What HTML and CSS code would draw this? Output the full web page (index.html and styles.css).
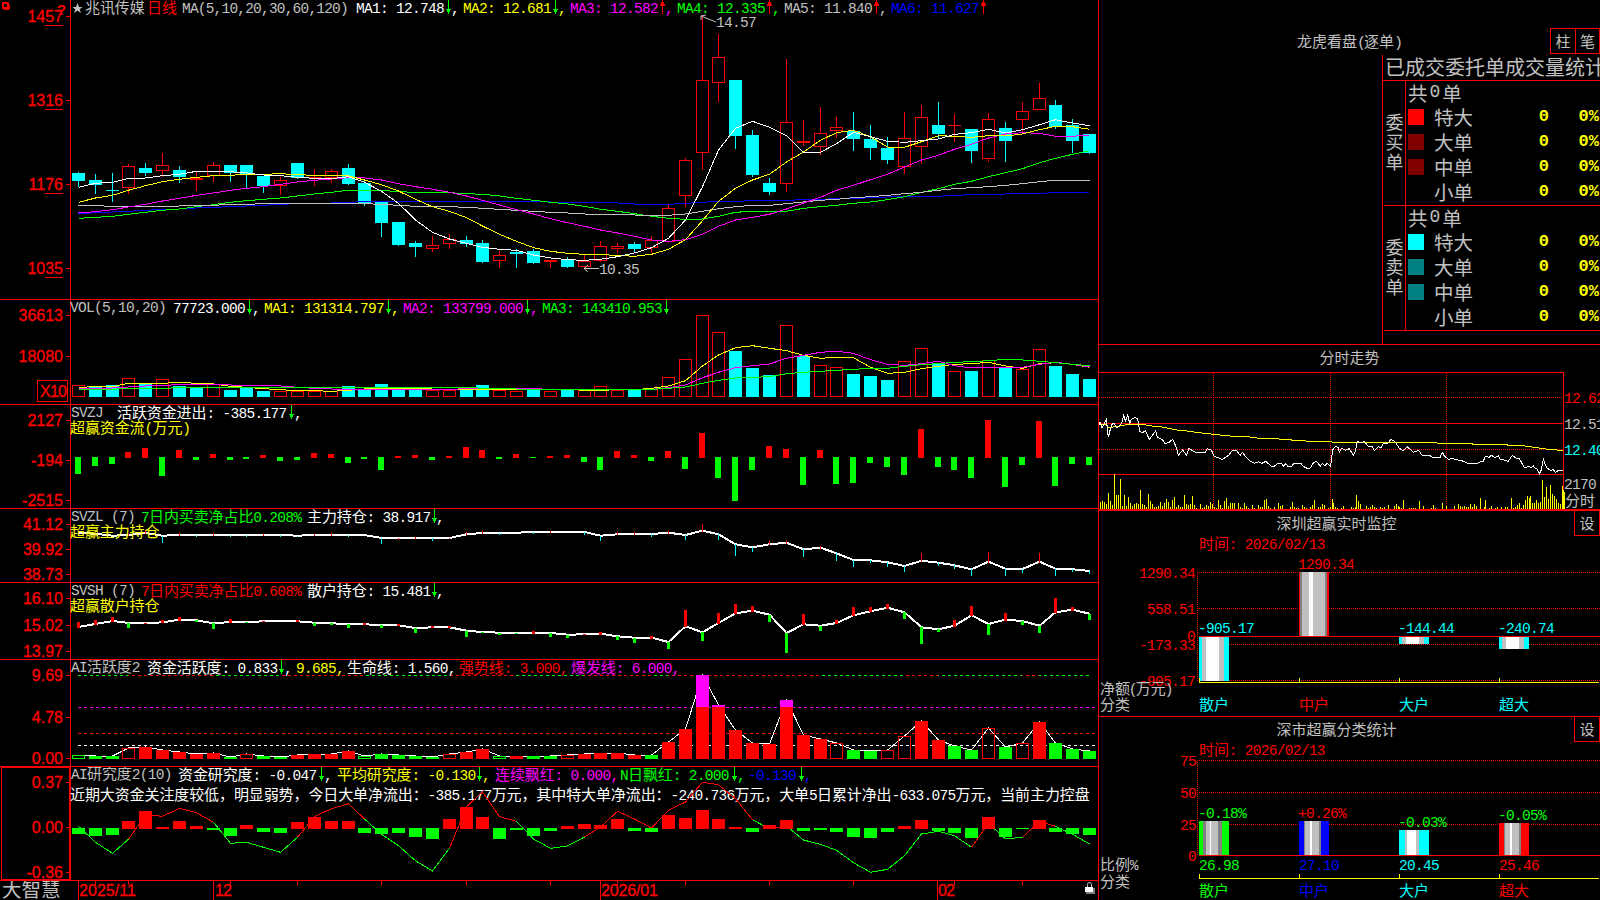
FILE: index.html
```html
<!DOCTYPE html>
<html lang="zh-CN">
<head>
<meta charset="utf-8">
<title>兆讯传媒 日线</title>
<link rel="stylesheet" href="styles.css">
</head>
<body>
<svg class="defs" width="0" height="0" aria-hidden="true">
  <defs>
    <g id="dn"><path d="M0 0V14M-2 9H2L0 13Z" fill="#0f0" stroke="#0f0"/></g>
    <g id="up"><path d="M0 14V0M-2 5H2L0 1Z" fill="#f00" stroke="#f00"/></g>
  </defs>
</svg>
<div class="screen">
  <main class="charts">
    <section class="panel">
      <svg width="1098" height="299" viewBox="0 0 1098 299">
        <path class="axis" d="M70.5 0V299M66 16.5H70M66 100.5H70M66 184.5H70M66 268.5H70"/>
        <path class="axis" d="M45 25.5H63M45 109.5H63M45 193.5H63M45 277.5H63"/>
        <rect x="3" y="3" width="5" height="5" fill="none" stroke="#f00" stroke-width="2"/><path class="axis" d="M4 9.500H9M9.500 5V9"/>
        <text class="q" x="57" y="15">?</text>
        <g class="scale"><text x="63" y="22">1457</text><text x="63" y="106">1316</text><text x="63" y="190">1176</text><text x="63" y="274">1035</text></g>
        <g id="price"></g>
        <path d="M77.500 3L79 7H82.500L79.700 9.300L81 13L77.500 10.600L74 13L75.300 9.300L72.500 7H76Z" fill="#c0c0c0"/>
        <g class="m">
          <text class="z silver" x="85" y="13">兆讯传媒</text><text class="z red" x="147" y="13">日线</text>
          <text class="silver" x="182" y="13" textLength="166">MA(5,10,20,30,60,120)</text>
          <text class="white" x="356" y="13">MA1: 12.748</text><text class="white" x="451" y="13">,</text>
          <text class="yellow" x="463" y="13">MA2: 12.681</text><text class="yellow" x="558" y="13">,</text>
          <text class="magenta" x="570" y="13">MA3: 12.582</text><text class="magenta" x="665" y="13">,</text>
          <text class="lime" x="677" y="13">MA4: 12.335</text><text class="lime" x="772" y="13">,</text>
          <text class="silver" x="784" y="13">MA5: 11.840</text><text class="silver" x="879" y="13">,</text>
          <text class="blue" x="891" y="13">MA6: 11.627</text>
          <text class="silver" x="716" y="27">14.57</text><text class="silver" x="599" y="274">10.35</text>
        </g>
        <path class="mark" d="M701 16L716 22M701 16V20M701 16L706 15M584 268.500H599M588 265L584 268.500L588 272"/>
        <use href="#dn" x="448.500" y="0"/><use href="#dn" x="555.500" y="0"/><use href="#up" x="662.500" y="0"/><use href="#up" x="769.500" y="0"/><use href="#up" x="876.500" y="0"/><use href="#up" x="983.500" y="0"/>
      </svg>
    </section>
    <section class="panel">
      <svg width="1098" height="104" viewBox="0 300 1098 104">
        <path class="axis" d="M70.5 300V404M66 315.500H70M66 356.500H70"/>
        <rect class="axis" x="37.500" y="380.500" width="30" height="21"/>
        <g class="scale"><text x="63" y="321">36613</text><text x="63" y="362">18080</text><text x="67" y="397" textLength="27">X10</text></g>
        <g id="volume"></g>
        <g class="m">
          <text class="silver" x="70" y="312">VOL(5,10,20)</text>
          <text class="white" x="173" y="313">77723.000</text><text class="white" x="252" y="313">,</text>
          <text class="yellow" x="264" y="313">MA1: 131314.797</text><text class="yellow" x="391" y="313">,</text>
          <text class="magenta" x="403" y="313">MA2: 133799.000</text><text class="magenta" x="530" y="313">,</text>
          <text class="lime" x="542" y="313">MA3: 143410.953</text>
        </g>
        <use href="#dn" x="249.500" y="300"/><use href="#dn" x="388.500" y="300"/><use href="#dn" x="527.500" y="300"/><use href="#dn" x="666.500" y="300"/>
      </svg>
    </section>
    <section class="panel">
      <svg width="1098" height="103" viewBox="0 405 1098 103">
        <path class="axis" d="M70.5 405V508M66 420.500H70M66 460.500H70M66 500.500H70"/>
        <g class="scale"><text x="63" y="426">2127</text><text x="63" y="466">-194</text><text x="63" y="506">-2515</text></g>
        <g id="flow"></g>
        <g class="m">
          <text class="silver" x="71" y="417">SVZJ</text>
          <text class="white" x="117" y="418"><tspan class="z">活跃资金进出</tspan>: -385.177</text><text class="white" x="294" y="418">,</text>
          <text class="yellow" x="70" y="433"><tspan class="z">超赢资金流</tspan>(<tspan class="z">万元</tspan>)</text>
        </g>
        <use href="#dn" x="291.500" y="405"/>
      </svg>
    </section>
    <section class="panel">
      <svg width="1098" height="73" viewBox="0 509 1098 73">
        <path class="axis" d="M70.5 509V582M66 524.500H70M66 549.500H70M66 574.500H70"/>
        <g class="scale"><text x="63" y="530">41.12</text><text x="63" y="555">39.92</text><text x="63" y="580">38.73</text></g>
        <g id="major"></g>
        <g class="m">
          <text class="silver" x="71" y="521">SVZL (7)</text>
          <text class="lime" x="141" y="522">7<tspan class="z">日内买卖净占比</tspan>0.208%</text>
          <text class="white" x="307" y="522"><tspan class="z">主力持仓</tspan>: 38.917</text><text class="white" x="436" y="522">,</text>
          <text class="yellow z" x="70" y="537">超赢主力持仓</text>
        </g>
        <use href="#dn" x="434.500" y="509"/>
      </svg>
    </section>
    <section class="panel">
      <svg width="1098" height="76" viewBox="0 583 1098 76">
        <path class="axis" d="M70.5 583V659M66 598.500H70M66 625.500H70M66 651.500H70"/>
        <g class="scale"><text x="63" y="604">16.10</text><text x="63" y="631">15.02</text><text x="63" y="657">13.97</text></g>
        <g id="retail"></g>
        <g class="m">
          <text class="silver" x="71" y="595">SVSH (7)</text>
          <text class="red" x="141" y="596">7<tspan class="z">日内买卖净占比</tspan>0.608%</text>
          <text class="white" x="307" y="596"><tspan class="z">散户持仓</tspan>: 15.481</text><text class="white" x="436" y="596">,</text>
          <text class="yellow z" x="70" y="611">超赢散户持仓</text>
        </g>
        <use href="#dn" x="434.500" y="583"/>
      </svg>
    </section>
    <section class="panel">
      <svg width="1098" height="106" viewBox="0 660 1098 106">
        <path class="axis" d="M70.5 660V766M66 675.500H70M66 717.500H70M66 758.500H70"/>
        <g class="scale"><text x="63" y="681">9.69</text><text x="63" y="723">4.78</text><text x="63" y="764">0.00</text></g>
        <g id="active"></g>
        <g class="m">
          <text class="silver" x="71" y="672">AI<tspan class="z">活跃度</tspan>2</text>
          <text class="white" x="147" y="673"><tspan class="z">资金活跃度</tspan>: 0.833</text><text class="white" x="284" y="673">,</text>
          <text class="yellow" x="296" y="673">9.685,</text>
          <text class="white" x="347" y="673"><tspan class="z">生命线</tspan>: 1.560,</text>
          <text class="red" x="459" y="673"><tspan class="z">强势线</tspan>: 3.000,</text>
          <text class="magenta" x="571" y="673"><tspan class="z">爆发线</tspan>: 6.000,</text>
        </g>
        <use href="#dn" x="281.500" y="660"/>
      </svg>
    </section>
    <section class="panel">
      <svg width="1098" height="113" viewBox="0 767 1098 113">
        <path class="axis" d="M70.5 767V880M66 782.500H70M66 827.500H70M66 872.500H70"/>
        <rect class="axis" x="1.500" y="767.500" width="68" height="112"/>
        <g class="scale"><text x="63" y="788">0.37</text><text x="63" y="833">0.00</text><text x="63" y="878">-0.36</text></g>
        <g class="m">
          <text class="silver" x="71" y="779">AI<tspan class="z">研究度</tspan>2(10)</text>
          <text class="white" x="178" y="780"><tspan class="z">资金研究度</tspan>: -0.047</text><text class="white" x="324" y="780">,</text>
          <text class="yellow" x="337" y="780"><tspan class="z">平均研究度</tspan>: -0.130</text><text class="yellow" x="482" y="780">,</text>
          <text class="magenta" x="495" y="780"><tspan class="z">连续飘红</tspan>: 0.000,</text>
          <text class="lime" x="620" y="780">N<tspan class="z">日飘红</tspan>: 2.000</text><text class="lime" x="737" y="780">,</text>
          <text class="blue" x="748" y="780">-0.130</text><text class="blue" x="804" y="780">,</text>
          <text class="white" x="70" y="800"><tspan class="z">近期大资金关注度较低，明显弱势，今日大单净流出：</tspan>-385.177<tspan class="z">万元，其中特大单净流出：</tspan>-240.736<tspan class="z">万元，大单</tspan>5<tspan class="z">日累计净出</tspan>-633.075<tspan class="z">万元，当前主力控盘</tspan></text>
        </g>
        <g id="study"></g>
        <use href="#dn" x="321.500" y="767"/><use href="#dn" x="479.500" y="767"/><use href="#dn" x="734.500" y="767"/><use href="#dn" x="801.500" y="767"/>
      </svg>
    </section>
    <footer class="dates">
      <svg width="1098" height="19" viewBox="0 881 1098 19">
        <path class="axis" d="M78.500 881V900M213.500 881V900M600.500 881V900M937.500 881V900M95.500 881V885M128.500 881V885M230.500 881V885M297.500 881V885M381.500 881V885M466.500 881V885M550.500 881V885M617.500 881V885M685.500 881V885M769.500 881V885M853.500 881V885M954.500 881V885M1022.500 881V885"/>
        <text class="brand" x="2" y="897">大智慧</text>
        <g class="date"><text x="79" y="896" textLength="57">2025/11</text><text x="215" y="896" textLength="17">12</text><text x="601" y="896" textLength="57">2026/01</text><text x="938" y="896" textLength="17">02</text></g>
        <path d="M1087.500 887V884.500Q1087.500 882.500 1089.500 882.500Q1091.500 882.500 1091.500 884.500V887" fill="none" stroke="#c0c0c0"/>
        <rect x="1086" y="888" width="9" height="6" fill="#808080"/><rect x="1085" y="887" width="8" height="5" fill="#fff"/>
      </svg>
    </footer>
  </main>
  <aside class="side">
    <section class="orders">
      <header class="bar"><h2>龙虎看盘<span class="mono">(</span>逐单<span class="mono">)</span></h2><div class="keys"><button>柱</button><button>笔</button></div></header>
      <div class="book">
        <h3>已成交委托单成交量统计</h3>
        <div class="half">
          <div class="tag"><span>委</span><span>买</span><span>单</span></div>
          <div class="rows">
            <p class="sum">共<b>0</b>单</p>
            <p><i class="c-red"></i><span>特大</span><b>0</b><b>0%</b></p>
            <p><i class="c-maroon"></i><span>大单</span><b>0</b><b>0%</b></p>
            <p><i class="c-maroon"></i><span>中单</span><b>0</b><b>0%</b></p>
            <p><i></i><span>小单</span><b>0</b><b>0%</b></p>
          </div>
        </div>
        <div class="half">
          <div class="tag"><span>委</span><span>卖</span><span>单</span></div>
          <div class="rows">
            <p class="sum">共<b>0</b>单</p>
            <p><i class="c-cyan"></i><span>特大</span><b>0</b><b>0%</b></p>
            <p><i class="c-teal"></i><span>大单</span><b>0</b><b>0%</b></p>
            <p><i class="c-teal"></i><span>中单</span><b>0</b><b>0%</b></p>
            <p><i></i><span>小单</span><b>0</b><b>0%</b></p>
          </div>
        </div>
      </div>
    </section>
    <section class="intraday">
      <h2>分时走势</h2>
      <svg width="501" height="139" viewBox="1099 372 501 139">
        <path class="dots" d="M1099 397.500H1563M1099 449.500H1563M1213.500 373V508M1330.500 373V508M1446.500 373V508"/>
        <path class="axis" d="M1099 372.500H1563.500V509M1099 423.500H1563M1099 474.500H1563"/>
        <g id="minute"></g>
        <path d="M1099 510H1600" stroke="#f00" stroke-width="2"/>
        <g class="m"><text class="red" x="1564" y="403">12.62</text><text class="silver" x="1564" y="429">12.51</text><text class="cyan" x="1564" y="455">12.40</text><text class="silver" x="1564" y="489">2170</text><text class="silver z" x="1565" y="506">分时</text></g>
      </svg>
    </section>
    <section class="monitor">
      <header class="bar"><h2>深圳超赢实时监控</h2><button>设</button></header>
      <svg width="501" height="180" viewBox="1099 536 501 180">
        <path class="dots" d="M1197 572.500H1600M1199 608.500H1600M1199 644.500H1600M1199 680.500H1600M1197.500 572V682"/>
        <g id="net"></g>
        <path class="axis" d="M1199 636.500H1600"/>
        <path class="base" d="M1199.500 678V682.500H1599M1299.500 678V682M1399.500 678V682M1499.500 678V682"/>
        <g class="m">
          <text class="red" x="1199" y="549"><tspan class="z">时间</tspan>: 2026/02/13</text>
          <text class="red" x="1139" y="578">1290.34</text><text class="red" x="1147" y="614">558.51</text><text class="red" x="1187" y="641">0</text><text class="red" x="1139" y="650">-173.33</text><text class="red" x="1139" y="686">-905.17</text>
          <text class="cyan" x="1198" y="633">-905.17</text><text class="red" x="1298" y="569">1290.34</text><text class="cyan" x="1398" y="633">-144.44</text><text class="cyan" x="1498" y="633">-240.74</text>
          <text class="silver" x="1100" y="694"><tspan class="z">净额</tspan><tspan dx="-1">(</tspan><tspan class="z" dx="-1">万元</tspan><tspan dx="-1">)</tspan></text><text class="silver z" x="1100" y="710">分类</text>
          <text class="cyan z" x="1199" y="710">散户</text><text class="red z" x="1299" y="710">中户</text><text class="cyan z" x="1399" y="710">大户</text><text class="cyan z" x="1499" y="710">超大</text>
        </g>
      </svg>
    </section>
    <section class="ratio">
      <header class="bar"><h2>深市超赢分类统计</h2><button>设</button></header>
      <svg width="501" height="158" viewBox="1099 742 501 158">
        <path class="dots" d="M1197 760.500H1600M1199 792.500H1600M1199 824.500H1600M1197.500 760V855"/>
        <g id="share"></g>
        <path class="axis" d="M1199 855.500H1600"/>
        <path class="base" d="M1199.500 874V878.500H1599M1299.500 874V878M1399.500 874V878M1499.500 874V878"/>
        <g class="m">
          <text class="red" x="1199" y="755"><tspan class="z">时间</tspan>: 2026/02/13</text>
          <text class="red" x="1180" y="766">75</text><text class="red" x="1180" y="798">50</text><text class="red" x="1180" y="830">25</text><text class="red" x="1188" y="861">0</text>
          <text class="lime" x="1198" y="818">-0.18%</text><text class="red" x="1298" y="818">+0.26%</text><text class="lime" x="1398" y="827">-0.03%</text><text class="lime" x="1498" y="820">-0.05%</text>
          <text class="lime" x="1199" y="870">26.98</text><text class="blue" x="1299" y="870">27.10</text><text class="cyan" x="1399" y="870">20.45</text><text class="red" x="1499" y="870">25.46</text>
          <text class="silver" x="1100" y="870"><tspan class="z">比例</tspan>%</text><text class="silver z" x="1100" y="887">分类</text>
          <text class="lime z" x="1199" y="896">散户</text><text class="blue z" x="1299" y="896">中户</text><text class="cyan z" x="1399" y="896">大户</text><text class="red z" x="1499" y="896">超大</text>
        </g>
      </svg>
    </section>
  </aside>
</div>
<script src="script.js"></script>
</body>
</html>
```
FILE: styles.css
```css
* { box-sizing: border-box; }
body { margin: 0; background: #000; color: #c0c0c0; font-family: "Liberation Mono", "Noto Sans CJK SC", monospace; overflow: hidden; }
h2, h3, p { margin: 0; font-weight: 400; }
svg { display: block; }
.defs { position: absolute; }
.screen { display: grid; grid-template-columns: 1099px 501px; width: 1600px; height: 900px; overflow: hidden; }
.charts { border-right: 1px solid #f00; }
.panel { border-bottom: 1px solid #f00; }

/* chart text */
.m text { font-family: "Liberation Mono", "Noto Sans CJK SC", monospace; font-size: 14.5px; letter-spacing: -0.7px; white-space: pre; }
.m .z { font-family: "Noto Sans CJK SC", sans-serif; font-size: 15px; letter-spacing: -0.1px; font-weight: 400; }
.scale text { font: 16px "Liberation Sans", sans-serif; fill: #f00; stroke: #f00; stroke-width: 0.3; text-anchor: end; }
.date text { font: 16px "Liberation Sans", sans-serif; fill: #f00; stroke: #f00; stroke-width: 0.3; }
.q { font: bold 15px "Liberation Sans", sans-serif; fill: #f00; }
.brand { font: 400 19.500px "Noto Sans CJK SC", sans-serif; fill: #c0c0c0; }
.silver { fill: #c0c0c0; }
.white { fill: #fff; }
.yellow { fill: #ff0; }
.magenta { fill: #f0f; }
.lime { fill: #0f0; }
.blue { fill: #00f; }
.red { fill: #f00; }
.cyan { fill: #0ff; }

/* chart lines */
.axis, .dots, .base, .mark, .line { fill: none; stroke: #f00; stroke-width: 1; shape-rendering: crispEdges; }
.dots { stroke-dasharray: 1 1; }
.base { stroke: #ff0; }
.mark { stroke: #c0c0c0; shape-rendering: auto; }
rect { shape-rendering: crispEdges; }
use { shape-rendering: crispEdges; }

/* right column */
.side { display: flex; flex-direction: column; }
h2 { font: 400 15px/25px "Noto Sans CJK SC", sans-serif; text-align: center; }
.mono { font-family: "Liberation Mono", monospace; letter-spacing: -2px; }
button { width: 26px; height: 26px; padding: 0; background: #000; border: 1px solid #f00; color: #c0c0c0; font: 400 15px/22px "Noto Sans CJK SC", sans-serif; text-align: center; }
.orders { height: 345px; padding-top: 28px; border-bottom: 1px solid #f00; overflow: hidden; }
.bar { display: flex; justify-content: flex-end; }
.bar h2 { flex: 1; }
.orders .bar h2 { padding-left: 49px; }
.keys { display: flex; }
.keys button + button { width: 25px; margin-left: -1px; }
.book { margin-left: 283px; width: 218px; height: 290px; border-left: 1px solid #f00; }
.book h3 { height: 27px; padding-left: 2px; font: 400 20px/24px "Noto Sans CJK SC", sans-serif; white-space: nowrap; border-bottom: 1px solid #f00; margin-top: -1px; line-height: 23px; }
.book h3 { height: 26px; overflow: hidden; }
.half { display: grid; grid-template-columns: 21px 1fr; height: 125px; margin-left: 1px; border-bottom: 1px solid #f00; }
.tag { display: flex; flex-direction: column; justify-content: center; align-items: center; padding-bottom: 4px; font: 400 18px/20px "Noto Sans CJK SC", sans-serif; }
.rows { border-left: 1px solid #f00; }
.rows p { display: grid; grid-template-columns: 16px 58px 67px 50px; padding-left: 2px; height: 25px; align-items: center; font: 400 19.500px/23px "Noto Sans CJK SC", sans-serif; }
.rows p.sum { display: flex; gap: 2px; height: 23px; }
.rows span { padding-left: 10px; white-space: nowrap; }
.rows i { width: 16px; height: 16px; }
.rows b { font: bold 17px/23px "Liberation Mono", monospace; color: #ff0; text-align: right; }
.rows .sum b { font-size: 18px; color: #c0c0c0; font-weight: 400; }
.c-red { background: #f00; }
.c-maroon { background: #800000; }
.c-cyan { background: #0ff; }
.c-teal { background: #008080; }
.intraday { height: 165px; }
.intraday h2 { height: 27px; line-height: 24px; }
.monitor { height: 207px; border-bottom: 1px solid #f00; overflow: hidden; }
.ratio { margin-top: -1px; }
```
FILE: script.js
```js
const NS = 'http://www.w3.org/2000/svg';
const COL = { w: '#fff', y: '#ff0', m: '#f0f', g: '#0f0', s: '#c0c0c0', b: '#00f', r: '#f00', c: '#0ff' };

/* centre pixel of trading day i */
const X = i => 78 + Math.round(16.855 * i - 0.1);
const nums = s => s.trim().split(/[\s,]+/).map(Number);

function add(id, tag, attrs) {
  const el = document.createElementNS(NS, tag);
  for (const k in attrs) el.setAttribute(k, attrs[k]);
  document.getElementById(id).appendChild(el);
}
const box = (id, x, y, w, h, fill) => add(id, 'rect', { x, y, width: w, height: Math.max(h, 1), fill });
const frame = (id, x, y, w, h, c) => add(id, 'rect', { x: x + 0.5, y: y + 0.5, width: w - 1, height: Math.max(h - 1, 0.5), fill: 'none', stroke: c });
const path = (id, d, c, width = 1) => add(id, 'path', { d, class: 'line', style: `stroke:${c};stroke-width:${width}` });

/* series values are thirds of a pixel below the panel origin */
function series(id, s, origin, c, width) {
  path(id, 'M' + nums(s).map((v, i) => `${X(i) + 0.5} ${(origin + v / 3).toFixed(1)}`).join('L'), c, width);
}

/* candles: colour, high, body top, body bottom, low */
const candles = `c172,173,181,187 c174,180,185,194 c173,190,191,202 r164,166,188,194 c163,168,173,176 r153,165,171,177 c166,170,177,183 r172,178,180,191 r162,165,176,182 c165,165,173,182 c165,165,175,188 c176,176,186,193 r177,180,186,195 c163,163,178,179 r169,177,178,186 r169,171,178,183 c164,168,184,185 c179,183,204,206 c202,202,223,237 c222,222,245,246 c241,243,247,257 r236,245,249,252 r234,239,244,249 c236,240,244,247 c240,243,262,263 r251,255,261,268 c249,252,254,268 c249,251,263,264 r260,260,262,268 c257,260,267,268 r254,261,267,268 r241,246,261,262 r243,246,249,253 c242,244,249,253 r236,240,248,253 r205,208,242,243 r158,160,196,207 r16,80,153,170 r34,57,83,102 c80,80,136,149 c130,135,175,177 c178,183,192,195 r59,122,184,192 r120,141,143,146 r107,133,147,155 r117,127,131,138 c112,131,139,151 c125,139,148,160 c137,148,160,164 r112,138,167,174 r105,117,147,164 c102,125,134,138 r114,125,126,142 c129,129,151,163 r113,119,159,162 c122,128,141,162 r102,111,120,133 r83,98,110,110 c100,105,127,129 c119,125,141,153 c134,134,153,154`;
candles.split(' ').forEach((t, i) => {
  const c = COL[t[0]], [hi, a, b, lo] = nums(t.slice(1)), x = X(i);
  if (t[0] === 'c' || b - a < 3) {
    box('price', x, hi, 1, lo - hi, c);
    box('price', x - 6, a, 13, b - a, c);
  } else {
    if (a > hi) box('price', x, hi, 1, a - hi, c);
    if (lo > b) box('price', x, b, 1, lo - b, c);
    frame('price', x - 6, a, 13, b - a, c);
  }
});
series('price', '641,638,636,634,631,628,627,624,622,620,618,616,613,611,610,609,607,605,604,604,604,604,604,604,604,604,604,604,606,607,607,608,609,612,612,613,610,607,604,604,602,602,601,599,598,596,596,593,591,590,589,589,586,584,583,582,581,580,578,578,577', 0, COL.b);
series('price', '655,652,649,643,637,631,627,620,614,607,602,598,594,588,582,577,571,571,571,575,577,577,578,581,583,588,595,601,607,612,619,628,634,641,649,655,658,657,649,637,634,634,634,625,620,616,610,606,599,590,577,566,553,544,530,518,506,488,475,463,452', 0, COL.g);
series('price', '616,617,619,619,619,619,618,616,616,613,613,611,611,610,610,610,610,611,613,616,619,619,620,622,625,628,631,634,637,639,642,643,643,645,646,646,642,634,626,620,616,616,611,606,601,598,593,590,586,581,577,571,566,563,560,556,551,545,541,541,541', 0, COL.s);
series('price', '639,635,629,621,613,603,595,586,579,571,565,560,553,546,541,537,533,534,540,551,560,568,577,588,601,615,629,642,656,668,679,690,699,709,720,724,719,703,679,660,652,643,627,609,592,571,556,539,523,501,480,466,448,433,414,402,398,400,409,409,405', 0, COL.m);
series('price', '607,594,586,571,557,545,538,532,527,526,523,523,521,524,526,527,528,540,554,573,598,620,634,653,678,703,724,743,754,760,763,764,766,769,763,748,719,662,604,565,540,523,486,456,421,398,391,410,441,442,425,407,409,412,407,408,402,389,379,380,388', 0, COL.y);
series('price', '562,550,547,535,534,527,523,514,514,515,519,525,527,532,535,536,530,547,574,610,660,697,717,730,742,748,751,765,774,779,781,778,770,759,743,715,660,560,450,385,364,382,407,457,457,431,397,410,424,427,422,417,403,398,388,399,389,374,359,369,377', 0, COL.w);

/* volume */
'r270 c276 c270 r249 c264 r252 c273 c279 r267 c285 c279 c288 r288 r288 r288 r288 c273 c282 c267 c279 c285 r286 r286 c284 c270 r284 r288 c284 r288 c285 r285 r273 r284 c284 r283 r246 r192 r60 r111 c168 c219 c240 r90 c183 r210 r216 c237 c243 c255 r198 r159 c204 r228 c228 r195 c217 r222 r162 c213 c237 c252'.split(' ').forEach((t, i) => {
  const y = 295 + Math.round(t.slice(1) / 3), draw = t[0] === 'c' ? box : frame;
  draw('volume', X(i) - 6, y, 13, 397 - y, COL[t[0]]);
});
series('volume', '277,275,275,265,266,265,262,265,267,274,277,281,284,287,287,289,286,282,279,281,281,282,283,283,283,283,283,284,284,283,286,286,284,284,280,273,257,213,180,158,152,160,167,181,190,187,188,217,235,232,221,214,208,206,202,213,220,206,203,208,217', 295, COL.y);
series('volume', '280,280,279,276,273,271,269,268,268,270,271,271,273,277,280,282,283,283,283,283,283,283,283,281,281,281,281,281,283,283,283,283,283,283,283,278,270,248,232,218,212,207,190,181,172,169,175,194,208,211,206,199,212,219,217,217,217,208,202,208,216', 295, COL.m);
series('volume', '283,283,283,280,280,280,278,277,277,277,277,277,277,277,277,277,277,277,277,277,277,277,277,277,280,281,282,283,283,283,283,283,283,283,283,280,276,265,256,249,247,245,236,232,229,226,223,220,220,214,209,206,202,200,197,193,195,199,203,208,212', 295, COL.g);

/* capital flow */
'g537 g513 g507 r471 r459 g543 r465 g495 r477 g495 g492 r480 g498 g495 r474 r477 g504 g492 g525 r483 r480 g495 r483 r456 r465 g492 r477 g489 r483 r480 g501 g525 r468 r480 g498 r468 g522 r414 g549 g618 g525 r453 r462 g570 r465 g567 g564 g504 g516 g540 r402 g516 g525 g549 r375 g576 g510 r378 g573 g507 g510'.split(' ').forEach((t, i) => {
  const y = 295 + t.slice(1) / 3;
  if (t[0] === 'r') box('flow', X(i) - 3, y, 6, 458 - y, COL.r);
  else box('flow', X(i) - 3, 457, 6, y - 457, COL.g);
});

/* holdings: line plus per-day ticks */
function holdings(id, line, ticks, origin, w) {
  series(id, line, origin, '#fff', 2);
  const ys = nums(line);
  ticks.trim().split(' ').forEach(t => {
    const [, i, k, v] = t.match(/(\d+)([rgc])(\d+)/), a = origin + ys[i] / 3, b = origin + v / 3;
    box(id, X(+i) - (w >> 1), Math.min(a, b), w, Math.abs(a - b) + 1, COL[k]);
  });
}
holdings('major', '714,716,722,720,714,722,720,720,719,720,720,720,720,722,720,719,719,720,729,730,729,729,729,718,714,714,713,711,711,711,711,722,718,716,717,713,720,707,718,748,757,748,743,763,758,775,795,796,802,813,797,803,811,823,800,821,822,800,821,823,828',
  '3r716 4r706 5c741 6r715 7c723 8r714 9c722 10c722 11r717 12c724 13c724 14r718 15r714 16c724 18c744 19r731 20r726 21c735 22r730 23r711 24r708 25c716 27c713 28r708 30c716 31c735 32r711 33r711 34c722 35r708 36c732 37r687 38c732 39c780 40c768 41r738 42r738 43c783 44r753 45c795 46c813 47c801 48c813 49c828 50r774 51c810 52c819 53c840 54r771 55c840 56c831 57r774 58c840 59c828 60c834', 295, 1);
holdings('retail', '111,102,93,99,100,97,89,91,100,96,96,94,93,94,98,100,102,103,105,106,114,112,112,122,126,128,129,129,129,134,133,131,139,143,143,156,109,127,99,70,62,74,129,103,107,99,76,64,53,67,112,118,107,76,102,89,93,107,67,59,71',
  '0r96 1r90 2r81 3g111 4r100 5r90 6r81 7g92 8g114 9r87 10g97 11r94 13r90 14g105 15g101 16g111 17r99 18g111 19r102 20g126 21r108 22r108 23g138 24g126 25g132 26g130 27r123 28g138 29g141 30r131 31r126 32g147 33g156 34r138 35g174 36r60 37g150 38r69 39r42 40r48 41g93 42g186 43r72 44g120 45r90 46r51 47r51 48r42 49g84 50g159 51g123 52r90 53r48 54g132 55r69 56g102 57g126 58r24 59r51 60g87', 590, 3);

/* activity: capitals are solid bars, lower case hollow */
const active = 'g495 G498 G498 r474 R471 R480 R486 R492 R489 G501 r492 G498 G501 R495 R492 R492 R483 g498 G492 G495 G498 G501 r492 R486 R477 g498 R498 G498 G498 r495 R492 R489 R489 R495 G495 R456 R417 R255 R345 R420 R459 R462 R330 R435 R447 r459 G480 G483 r480 r438 R393 R450 G468 G480 r414 G471 r459 R396 G459 G477 G483'.split(' ');
const dash = (y, a, b, c) => add('active', 'path', { d: `M${a} ${y}H${b}`, class: 'line', style: `stroke:${c};stroke-dasharray:3 3;stroke-dashoffset:${(a - 78) % 6}` });
[[0, 3, 'g'], [3, 8, 'r'], [8, 12, 'g'], [12, 17, 'r'], [17, 22, 'g'], [22, 26, 'r'], [26, 30, 'g'], [30, 34, 'r'], [34, 35, 'g'], [35, 44, 'r'], [44, 49, 'g'], [49, 51, 'r'], [51, 56, 'g'], [56, 57, 'r'], [57, 60, 'g']].forEach(([a, b, c]) => dash(675.5, X(a), X(b), COL[c]));
dash(707.5, 78, 1096, COL.m);
dash(733.5, 78, 1096, COL.r);
dash(745.5, 78, 1096, COL.w);
series('active', active.map(t => t.slice(1)).join(), 590, COL.w);
active.forEach((t, i) => {
  const y = 590 + Math.round(t.slice(1) / 3), k = t[0], c = COL[k.toLowerCase()];
  (k < 'a' ? box : frame)('active', X(i) - 6, y, 13, 759 - y, c);
  if (y < 707) box('active', X(i) - 6, y, 13, 707 - y, COL.m);
});

/* research: coloured line behind bars around zero */
const study = nums('709,757,790,748,675,679,655,668,697,760,757,772,787,742,680,656,641,687,733,767,812,843,775,650,606,680,694,747,775,768,741,711,664,687,714,661,636,577,584,626,689,717,708,750,763,781,818,847,838,797,732,724,737,772,700,747,742,694,709,733,762');
[[0, 3, 'g'], [3, 8, 'r'], [8, 13, 'g'], [13, 17, 'r'], [17, 22, 'g'], [22, 26, 'r'], [26, 30, 'g'], [30, 40, 'r'], [40, 41, 'g'], [41, 42, 'r'], [42, 53, 'g'], [53, 54, 'r'], [54, 56, 'g'], [56, 58, 'r'], [58, 60, 'g']].forEach(([a, b, c]) => {
  let d = '';
  for (let i = a; i <= b; i++) d += `${i > a ? 'L' : 'M'}${X(i) + 0.5} ${(590 + study[i] / 3).toFixed(1)}`;
  path('study', d, COL[c]);
});
'g732 g738 g735 r693 r663 r711 r693 r708 g720 g738 r705 g726 g729 r696 r681 r693 r693 g729 g732 g729 g741 g747 r687 r651 r681 g747 g720 g738 g723 r708 r702 r705 r687 g723 g726 r675 r684 r660 r687 r711 g726 r705 r690 g723 g720 g726 g741 g744 g726 r708 r690 g723 g729 g744 r681 g741 g717 r690 g726 g732 g735'.split(' ').forEach((t, i) => {
  const y = 590 + t.slice(1) / 3;
  if (t[0] === 'r') box('study', X(i) - 6, y, 13, 829 - y, COL.r);
  else box('study', X(i) - 6, 828, 13, y - 828, COL.g);
});

/* intraday price, average and minute volume; two half-sessions */
const half = (s, ox) => s.trim().split(' ').map(p => { const [x, y] = p.split(','); return `${(ox + x / 3).toFixed(1)} ${(410 + y / 3).toFixed(1)}`; });
const curve = (a, b, c) => path('minute', 'M' + half(a, 1097).concat(half(b, 1330)).join('L'), c);
const vols = nums('276,273,276,282,249,273,285,192,255,255,207,288,255,288,261,279,288,282,279,282,240,282,286,290,252,273,282,291,291,288,276,288,279,267,276,290,270,261,292,285,291,290,255,282,286,282,258,285,294,296,282,294,291,285,288,276,282,291,294,270,285,295,273,264,288,279,279,279,296,279,291,293,279,288,293,296,285,294,296,284,290,290,270,267,288,295,296,292,296,279,288,284,296,296,296,291,276,292,294,294,296,284,290,294,296,292,284,270,296,290,292,282,284,296,294,292,267');
vols.forEach((v, i) => { const y = 410 + v / 3; box('minute', 1100 + 2 * i, y, 1, 509 - y, COL.y); });
nums('279,291,295,296,293,289,296,296,296,291,295,291,255,273,282,296,296,288,294,292,285,292,295,296,290,294,291,296,285,296,296,288,282,288,292,295,270,296,296,294,294,294,295,296,273,296,288,296,296,296,294,286,293,296,296,296,279,296,289,296,296,296,288,296,282,288,290,288,290,291,282,292,282,288,296,264,296,291,270,296,295,288,296,293,292,296,291,296,291,290,296,264,294,291,285,279,294,285,270,258,264,258,279,279,270,279,276,210,261,231,267,225,252,258,267,279,283,228,246').forEach((v, i) => { const y = 410 + v / 3; box('minute', Math.round(1333 + 1.955 * i), y, 1, 509 - y, COL.y); });
box('minute', 1563, 490, 1, 19, COL.y);
curve('6,44 30,44 34,53 70,48 95,43 140,44 165,48 190,50 215,55 240,60 270,63 320,70 370,75 406,79 460,81 485,85 545,87 595,91 640,94 700,95', '10,97 315,97 325,100 425,101 430,103 530,104 535,106 580,107 620,113 655,118 680,120 700,122', COL.y);
curve('6,44 9,36 15,55 24,36 28,28 34,82 40,58 46,41 52,41 58,54 68,47 74,40 80,16 85,34 92,16 98,40 103,28 115,22 122,28 128,64 137,68 145,62 157,88 165,78 176,62 181,82 190,85 197,90 203,100 215,98 227,88 238,112 244,136 257,120 269,136 275,115 293,126 325,127 331,116 343,120 352,140 363,142 376,149 388,140 396,135 406,121 418,121 430,136 436,127 448,142 460,154 473,160 485,155 495,160 506,154 522,168 533,168 542,160 554,160 560,170 566,160 573,170 585,168 590,160 597,160 612,160 617,168 630,175 640,174 648,160 658,154 670,168 676,160 684,168 690,160 700,168',
  '2,165 8,120 16,110 24,112 28,127 34,115 46,121 58,116 70,136 76,124 82,95 97,98 103,94 115,109 127,109 133,122 145,110 153,114 160,100 174,99 183,88 194,94 208,115 220,122 232,110 250,127 266,121 276,136 300,137 308,142 330,143 337,127 343,138 356,148 366,145 380,149 396,152 412,160 443,160 452,155 460,154 466,138 478,142 484,136 495,143 505,137 511,148 523,150 535,154 547,136 560,146 568,145 583,173 595,170 605,172 610,168 616,176 620,174 628,192 634,180 640,148 650,174 664,182 670,178 676,187 686,181 700,181', COL.w);

/* cylinder bars: colour bands given as colour + right edge offset */
const GREY = { k: '#808080' };
function cylinder(id, x, y, h, bands) {
  let left = 0;
  bands.split(' ').forEach(t => {
    const right = +t.slice(1);
    box(id, x + left, y, right - left, h, COL[t[0]] || GREY[t[0]]);
    left = right;
  });
}
cylinder('net', 1199, 637, 44, 'c3 s7 w20 s25 c30');
cylinder('net', 1299, 572, 64, 'r1 k3 s10 w14 s26 k28 r30');
cylinder('net', 1399, 637, 7, 'c3 s7 w20 s25 c30');
cylinder('net', 1499, 637, 12, 'c3 s7 w20 s25 c30');
cylinder('share', 1199, 821, 34, 'g4 k7 s11 w12 s19 k23 g30');
cylinder('share', 1299, 821, 34, 'b5 k6 s11 w13 s20 k22 b30');
cylinder('share', 1399, 830, 25, 'c6 s8 w17 s20 c30');
cylinder('share', 1499, 823, 32, 'r5 k6 s11 w13 s20 k22 r30');
```
